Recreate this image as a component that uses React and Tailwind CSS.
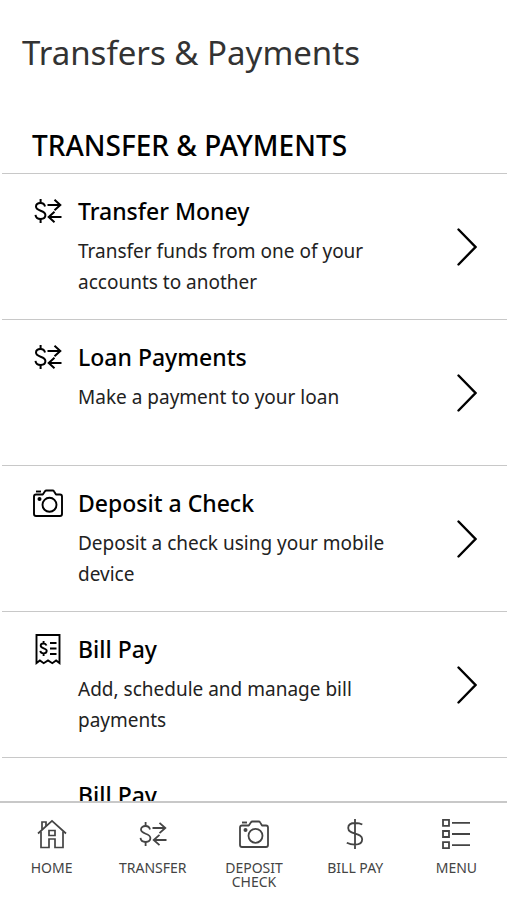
import React from 'react';

function TransferIcon({ className, strokeWidth }) {
  return (
    <svg viewBox="0 0 28 24" className={className} fill="none" stroke="currentColor" strokeWidth={strokeWidth} aria-hidden="true">
      <path d="M11 7.5C10.5 5 8.8 4 6.5 4 4 4 2 5.3 2 7.6c0 5.1 9.4 3.2 9.4 8.5 0 2.5-2 3.9-4.7 3.9-2.9 0-4.9-1.3-5.2-4.1" />
      <path d="M6.6 0v4M6.6 20v4" />
      <path d="M13.5 6h13M20.5 0.800l5.800 5.200-5.800 5.200M27.500 18H14.500M20.500 12.800l-5.800 5.200 5.800 5.200" />
    </svg>
  );
}

function CameraIcon({ className, strokeWidth }) {
  return (
    <svg viewBox="0 0 30 28" className={className} fill="none" stroke="currentColor" strokeWidth={strokeWidth} aria-hidden="true">
      <path d="M3 5.500H9.800L11.800 2.400Q12.400 1.500 13.400 1.500h6.200q1 0 1.500.9L23 5.500H27q2 0 2 2v17.500q0 2-2 2H3q-2 0-2-2v-17.500q0-2 2-2Z" strokeLinejoin="round" />
      <path d="M3 2.500h5" strokeWidth="1.900" />
      <circle cx="16.500" cy="15.800" r="7" />
      <circle cx="6.500" cy="10" r="2" fill="currentColor" stroke="none" />
    </svg>
  );
}

function BillIcon({ className, strokeWidth }) {
  return (
    <svg viewBox="0 0 26 32" className={className} fill="none" stroke="currentColor" strokeWidth={strokeWidth} aria-hidden="true">
      <path d="M1.500 30V2h23v28l-3.400-2.600-3.800 2.800-4.300-2.800-4.300 2.800-3.800-2.800Z" />
      <path d="M11.500 12.500c-.5-1.400-1.500-2-3-2-1.700 0-2.800.8-2.800 2.300 0 3.200 6 1.900 6 5 0 1.700-1.300 2.600-3.100 2.600-1.800 0-3-.8-3.300-2.500M8.600 8v2.500M8.600 20.500v2.500" />
      <path d="M15 10h6.500M15 15.500h6.500M15 21h6.500" />
    </svg>
  );
}

function HomeIcon({ className }) {
  return (
    <svg viewBox="0 0 30 30" className={className} fill="none" stroke="currentColor" strokeWidth="1.700" aria-hidden="true">
      <path d="M1 14.500 15 1.800 29 14.500" />
      <path d="M4 12.500v16h8v-8.500h6v8.500h8v-16" />
      <path d="M5 10.500V3h4v4" />
      <path d="M12 11.500h6v5h-6Z" />
    </svg>
  );
}

function DollarIcon({ className }) {
  return (
    <svg viewBox="0 0 18 32" className={className} fill="none" stroke="currentColor" strokeWidth="1.800" aria-hidden="true">
      <path d="M16.300 6.500C14.500 5.500 12 5 9.300 5 5 5 2.200 6.800 2.200 10c0 7.300 14 4 14 11.300 0 3.400-2.900 5.300-7.200 5.300-3 0-6-.7-8.200-1.900M9 1v30" />
    </svg>
  );
}

function MenuIcon({ className }) {
  return (
    <svg viewBox="0 0 30 32" className={className} fill="none" stroke="currentColor" strokeWidth="1.800" aria-hidden="true">
      <path d="M2 1.800h6v6H2ZM2 13h6v6H2ZM2 24.200h6v6H2ZM11 4.800h18M11 16h18M11 27.200h18" />
    </svg>
  );
}

function ChevronIcon() {
  return (
    <svg viewBox="0 0 20 38" className="h-[38px] w-5 shrink-0" fill="none" stroke="currentColor" strokeWidth="2.400" strokeLinecap="round" aria-hidden="true">
      <path d="M1.500 1.500 18.500 19 1.500 36.500" />
    </svg>
  );
}

const items = [
  { title: 'Transfer Money', text: 'Transfer funds from one of your accounts to another', icon: <TransferIcon className="h-6 w-7" strokeWidth="2" /> },
  { title: 'Loan Payments', text: 'Make a payment to your loan', icon: <TransferIcon className="h-6 w-7" strokeWidth="2" /> },
  { title: 'Deposit a Check', text: 'Deposit a check using your mobile device', icon: <CameraIcon className="h-7 w-[30px]" strokeWidth="1.900" /> },
  { title: 'Bill Pay', text: 'Add, schedule and manage bill payments', icon: <BillIcon className="h-8 w-[26px]" strokeWidth="1.900" /> },
  { title: 'Bill Pay', text: '', icon: null },
];

const tabs = [
  { label: 'HOME', icon: <HomeIcon className="h-[30px] w-[30px]" /> },
  { label: 'TRANSFER', icon: <TransferIcon className="h-6 w-7" strokeWidth="1.800" /> },
  { label: 'DEPOSIT CHECK', icon: <CameraIcon className="h-7 w-[30px]" strokeWidth="1.800" /> },
  { label: 'BILL PAY', icon: <DollarIcon className="h-8 w-[18px]" /> },
  { label: 'MENU', icon: <MenuIcon className="h-8 w-[30px]" /> },
];

export default function App() {
  return (
    <div className="flex h-screen flex-col bg-white font-['Noto_Sans',sans-serif] text-black">
      <main className="min-h-0 flex-1 overflow-hidden">
        <h1 className="px-[22px] pt-[29px] text-[33px] leading-12 text-[#333]">Transfers &amp; Payments</h1>
        <section className="ml-0.5">
          <h2 className="border-b border-[#c8c8c8] px-[30px] pt-12 pb-2 text-[28px] leading-10 font-medium">TRANSFER &amp; PAYMENTS</h2>
          <ul>
            {items.map((item, i) => (
              <li key={i} className="border-b border-[#c8c8c8]">
                <a href="#" className="flex min-h-[145px] items-center px-[30px]">
                  <span className="mt-[21px] flex h-8 w-8 shrink-0 items-center justify-center self-start">{item.icon}</span>
                  <span className="mt-[21px] ml-3.5 min-w-0 flex-1 self-start pr-14">
                    <span className="block text-[23px] leading-8 font-medium">{item.title}</span>
                    <span className="mt-[9px] block text-[19px] leading-[31px] text-[#222]">{item.text}</span>
                  </span>
                  <ChevronIcon />
                </a>
              </li>
            ))}
          </ul>
        </section>
      </main>
      <nav className="grid h-[99px] shrink-0 grid-cols-5 border-t-2 border-[#c8c8c8] bg-white pl-px text-[#444]">
        {tabs.map((tab) => (
          <a key={tab.label} href="#" className="flex flex-col items-center pt-[15px]">
            <span className="flex h-8 items-center">{tab.icon}</span>
            <span className="mt-[11px] w-20 text-center text-[14px] leading-[14px]">{tab.label}</span>
          </a>
        ))}
      </nav>
    </div>
  );
}
